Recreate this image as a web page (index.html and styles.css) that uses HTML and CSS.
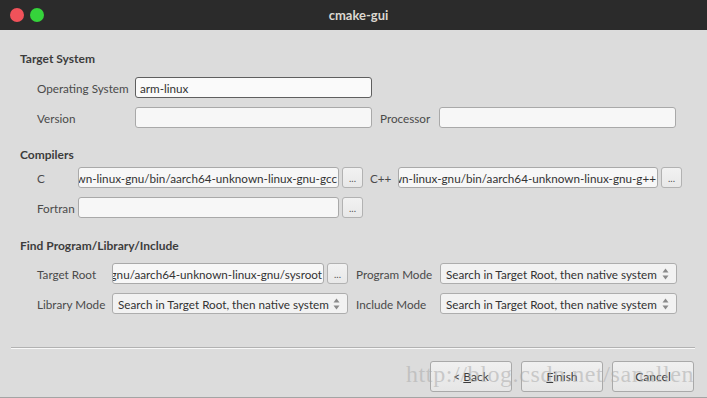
FILE: index.html
```html
<!DOCTYPE html>
<html lang="en">
<head>
    <meta charset="UTF-8">
    <title>cmake-gui</title>
    <link rel="stylesheet" href="styles.css">
</head>
<body>

    <div class="window">
        <!-- Title bar -->
        <div class="titlebar">
            <span class="dot dot-close"></span>
            <span class="dot dot-max"></span>
            <span class="title">cmake-gui</span>
        </div>

        <div class="content">
            <!-- Target System -->
            <div class="group group-target">
                <h3>Target System</h3>
                <div class="row">
                    <span class="label w-98">Operating System</span>
                    <div class="field focused w-237"><span>arm-linux</span></div>
                </div>
                <div class="row">
                    <span class="label w-98">Version</span>
                    <div class="field w-237"></div>
                    <span class="label side w-59">Processor</span>
                    <div class="field w-237"></div>
                </div>
            </div>

            <!-- Compilers -->
            <div class="group group-compilers">
                <h3>Compilers</h3>
                <div class="row">
                    <span class="label w-41">C</span>
                    <div class="field scrolled w-261"><span>/opt/toolchain/aarch64-unknown-linux-gnu/bin/aarch64-unknown-linux-gnu-gcc</span></div>
                    <button class="browse">...</button>
                    <span class="label side-sm w-28">C++</span>
                    <div class="field scrolled w-260"><span>/opt/toolchain/aarch64-unknown-linux-gnu/bin/aarch64-unknown-linux-gnu-g++</span></div>
                    <button class="browse">...</button>
                </div>
                <div class="row">
                    <span class="label w-41">Fortran</span>
                    <div class="field w-261"></div>
                    <button class="browse">...</button>
                </div>
            </div>

            <!-- Find Program/Library/Include -->
            <div class="group group-find">
                <h3>Find Program/Library/Include</h3>
                <div class="row">
                    <span class="label w-75">Target Root</span>
                    <div class="field scrolled w-212"><span>/opt/toolchain/aarch64-unknown-linux-gnu/aarch64-unknown-linux-gnu/sysroot</span></div>
                    <button class="browse">...</button>
                    <span class="label side w-84">Program Mode</span>
                    <div class="select w-237">
                        <span>Search in Target Root, then native system</span>
                        <svg class="spin" width="7" height="12" viewBox="0 0 7 12"><path d="M3.5 0.5 L6.5 4.5 L0.5 4.5 Z M3.5 11.5 L6.5 7.5 L0.5 7.5 Z" fill="#8a8a8a"/></svg>
                    </div>
                </div>
                <div class="row">
                    <span class="label w-75">Library Mode</span>
                    <div class="select w-236">
                        <span>Search in Target Root, then native system</span>
                        <svg class="spin" width="7" height="12" viewBox="0 0 7 12"><path d="M3.5 0.5 L6.5 4.5 L0.5 4.5 Z M3.5 11.5 L6.5 7.5 L0.5 7.5 Z" fill="#8a8a8a"/></svg>
                    </div>
                    <span class="label side w-84">Include Mode</span>
                    <div class="select w-237">
                        <span>Search in Target Root, then native system</span>
                        <svg class="spin" width="7" height="12" viewBox="0 0 7 12"><path d="M3.5 0.5 L6.5 4.5 L0.5 4.5 Z M3.5 11.5 L6.5 7.5 L0.5 7.5 Z" fill="#8a8a8a"/></svg>
                    </div>
                </div>
            </div>
        </div>

        <!-- Wizard buttons -->
        <div class="footer">
            <div class="separator"></div>
            <div class="buttons">
                <button class="push">&lt; <u>B</u>ack</button>
                <button class="push"><u>F</u>inish</button>
                <button class="push">Cancel</button>
            </div>
        </div>

        <div class="watermark">http://blog.csdn.net/sanallen</div>
    </div>

</body>
</html>
```

FILE: styles.css
```css
* {
    box-sizing: border-box;
}

body {
    margin: 0;
    padding: 0;
    font-family: 'Lato', 'Open Sans', sans-serif;
    font-size: 11.7px;
    background-color: #dcdcdc;
}

.window {
    position: relative;
    width: 707px;
    height: 398px;
    background-color: #dcdcdc;
    border-bottom: 1px solid #a4a4a4;
    overflow: hidden;
}

/* Title bar */
.titlebar {
    position: relative;
    height: 30px;
    background-color: #2b2b2b;
    display: flex;
    align-items: center;
    padding-left: 10px;
    gap: 6px;
}

.dot {
    width: 14px;
    height: 14px;
    border-radius: 50%;
}

.dot-close {
    background-color: #f0525a;
}

.dot-max {
    background-color: #35d33b;
}

.title {
    flex: 1;
    text-align: center;
    margin-right: 40px;
    color: #dcd8d0;
    font-weight: bold;
    font-size: 13px;
}

/* Groups */
.content {
    padding-left: 20px;
}

.group h3 {
    margin: 0;
    height: 16px;
    line-height: 16px;
    font-size: 12px;
    font-weight: bold;
    color: #3c3c3c;
}

.group-target {
    padding-top: 21px;
}

.group-target h3 {
    margin-bottom: 10px;
}

.group-compilers {
    padding-top: 19px;
}

.group-compilers h3 {
    margin-bottom: 4px;
}

.group-find {
    padding-top: 20px;
}

.group-find h3 {
    margin-bottom: 9px;
}

.row {
    display: flex;
    align-items: center;
    height: 21px;
    padding-left: 17px;
    margin-bottom: 9px;
}

.row:last-child {
    margin-bottom: 0;
}

.label {
    color: #4a4a4a;
    white-space: nowrap;
    flex-shrink: 0;
}

.side {
    margin-left: 8px;
}

.side-sm {
    margin-left: 7px;
}

.w-28 { width: 28px; }
.w-41 { width: 41px; }
.w-59 { width: 59px; }
.w-75 { width: 75px; }
.w-84 { width: 84px; }
.w-98 { width: 98px; }
.w-212 { width: 212px; }
.w-236 { width: 236px; }
.w-237 { width: 237px; }
.w-260 { width: 260px; }
.w-261 { width: 261px; }

/* Line edits */
.field {
    height: 21px;
    flex-shrink: 0;
    display: flex;
    align-items: center;
    padding: 0 4px;
    background-color: #f7f7f7;
    border: 1px solid #a9a9a9;
    border-radius: 3px;
    color: #333333;
    white-space: nowrap;
    overflow: hidden;
}

.field.focused {
    border-color: #5f5f5f;
    background-color: #fafafa;
}

.field.scrolled {
    justify-content: flex-end;
    padding: 0 1px 0 0;
}

.field span {
    flex-shrink: 0;
}

/* Browse buttons */
.browse {
    width: 21px;
    height: 21px;
    flex-shrink: 0;
    margin-left: 3px;
    padding: 0 0 4px;
    border: 1px solid #b2b2b2;
    border-radius: 3px;
    background: linear-gradient(#f2f2f2, #e8e8e8);
    color: #555555;
    font-family: inherit;
    font-size: 10px;
    line-height: 10px;
    display: flex;
    align-items: flex-end;
    justify-content: center;
}

/* Combo boxes */
.select {
    height: 21px;
    flex-shrink: 0;
    display: flex;
    align-items: center;
    justify-content: space-between;
    padding: 0 7px 0 5px;
    background-color: #f2f2f2;
    border: 1px solid #adadad;
    border-radius: 3px;
    color: #333333;
    white-space: nowrap;
}

/* Footer */
.footer {
    position: absolute;
    left: 0;
    right: 0;
    top: 347px;
}

.separator {
    margin: 0 12px 0 11px;
    height: 2px;
    border-top: 1px solid #b2b2b2;
    border-bottom: 1px solid #f8f8f8;
}

.buttons {
    display: flex;
    justify-content: flex-end;
    gap: 9px;
    padding: 12px 13px 0 0;
}

.push {
    width: 82px;
    height: 31px;
    border: 1px solid #a9a9a9;
    border-radius: 3px;
    background: linear-gradient(#f0f0f0, #e6e6e6);
    color: #3c3c3c;
    font-family: inherit;
    font-size: 12px;
    padding: 0;
}

.watermark {
    position: absolute;
    left: 406px;
    top: 361px;
    font-family: 'Liberation Serif', serif;
    font-size: 24px;
    letter-spacing: 0.6px;
    color: rgba(170, 170, 170, 0.55);
    white-space: nowrap;
    pointer-events: none;
}
```
